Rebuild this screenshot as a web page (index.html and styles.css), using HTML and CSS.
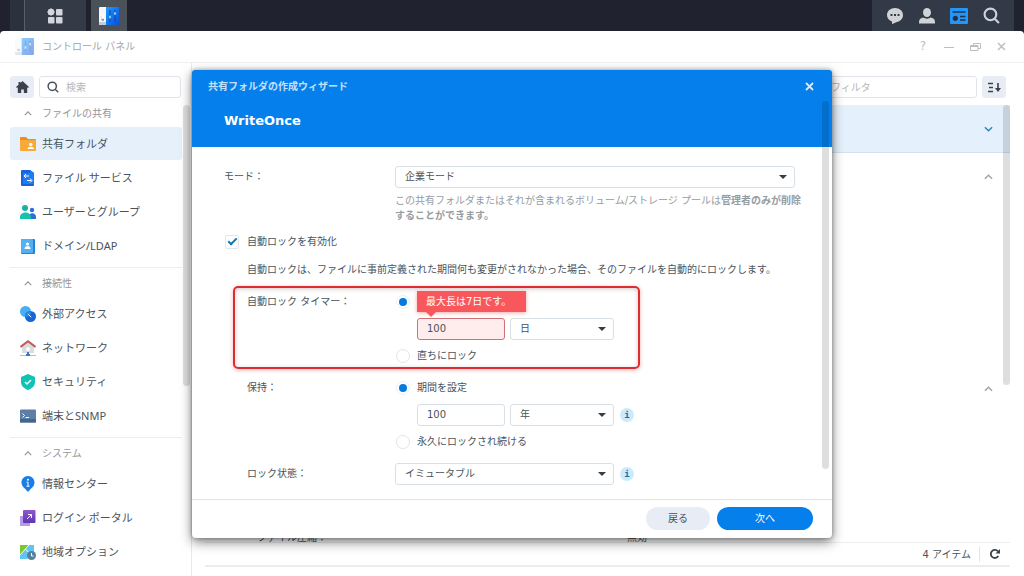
FILE: index.html
```html
<!DOCTYPE html>
<html lang="ja">
<head>
<meta charset="utf-8">
<title>コントロール パネル</title>
<link rel="stylesheet" href="styles.css">
</head>
<body>
<svg class="defs" aria-hidden="true">
  <linearGradient id="panel-blue" x1="0" y1="0" x2="1" y2="1"><stop offset="0" stop-color="#1d9bff"/><stop offset="1" stop-color="#0a50d8"/></linearGradient>
  <linearGradient id="purple" x1="0" y1="0" x2="0" y2="1"><stop offset="0" stop-color="#9058cc"/><stop offset="1" stop-color="#5c36ae"/></linearGradient>
  <symbol id="panel" viewBox="0 0 20 18">
    <path fill="#f4f6fa" d="M1 0h6v18H1a1 1 0 0 1-1-1V1a1 1 0 0 1 1-1z"/>
    <path fill="#c4ccda" d="M0 15h7v3H1a1 1 0 0 1-1-1z"/>
    <rect x="2.500" y="9" width="2.500" height="5" rx="1.200" fill="#8793ab"/><rect x="2.500" y="8" width="2.500" height="4" rx="1.200" fill="#fff"/>
    <path fill="url(#panel-blue)" d="M7 0h12a1 1 0 0 1 1 1v16a1 1 0 0 1-1 1H7z"/>
    <path stroke="#0a45a8" d="M11 3v12M16 3v12"/>
    <path stroke="#8ad0ff" stroke-width="2" stroke-linecap="round" d="M11 9.500v1M16 6v1"/>
  </symbol>
  <symbol id="up" viewBox="0 0 10 6"><path fill="none" stroke="currentColor" stroke-width="1.600" d="M1 5l4-4 4 4"/></symbol>
  <symbol id="caret" viewBox="0 0 8 4"><path fill="#333d47" d="M0 0h8L4 4z"/></symbol>
  <symbol id="search" viewBox="0 0 16 16"><path fill="none" stroke="currentColor" stroke-width="2" d="M7 1.500a5.500 5.500 0 1 1 0 11 5.500 5.500 0 0 1 0-11zM11 11l4 4"/></symbol>
</svg>

<header class="taskbar">
  <nav class="task-left">
    <button class="task menu" aria-label="メインメニュー"><svg width="16" height="16" viewBox="0 0 16 16" fill="#d3d6db"><path d="M4 0l4 4-4 4-4-4z"/><rect x="1" y="1" width="6" height="6" rx="1.500"/><rect x="9" y="1" width="6.500" height="6.500" rx="1"/><rect x="1" y="9" width="6.500" height="6.500" rx="1"/><rect x="9" y="9" width="6.500" height="6.500" rx="1"/></svg></button>
    <button class="task active" aria-label="コントロール パネル"><svg width="20" height="18"><use href="#panel"/></svg></button>
  </nav>
  <nav class="task-right">
    <button aria-label="通知"><svg width="16" height="16" viewBox="0 0 16 16"><path fill="#cfd2d7" d="M8 0c4.600 0 8 3 8 7s-3 6.500-6 7c-1.200.200-3 1.500-5 2v-2.500C2 12.500 0 10 0 7c0-4 3.500-7 8-7z"/><path fill="#323a48" d="M3.500 6h2v2h-2zM7 6h2v2H7zM10.500 6h2v2h-2z"/></svg></button>
    <button aria-label="ユーザー"><svg width="16" height="16" viewBox="0 0 16 16" fill="#cfd2d7"><ellipse cx="8" cy="4.500" rx="4" ry="4.500"/><path d="M0 14c0-3 2-4 4.500-4.500C6 11 10 11 11.500 9.500 14 10 16 11 16 14v1.500H0z"/></svg></button>
    <button aria-label="ウィジェット"><svg width="18" height="16" viewBox="0 0 18 16"><rect width="18" height="16" rx="1" fill="#2196fb"/><path stroke="#263145" stroke-width="1.600" d="M2.500 4h13M10 8.500h5.500M10 12h5.500"/><circle cx="5.300" cy="10.300" r="2.600" fill="#263145"/></svg></button>
    <button class="find" aria-label="検索"><svg width="17" height="17"><use href="#search" width="17" height="17"/></svg></button>
  </nav>
</header>

<main class="window">
  <header class="titlebar">
    <svg class="faded" width="19" height="17"><use href="#panel" width="19" height="17"/></svg>
    <h1>コントロール パネル</h1>
    <div class="controls">
      <button aria-label="ヘルプ">?</button>
      <button aria-label="最小化"><svg width="10" height="10"><path stroke="currentColor" d="M0 5.500h10"/></svg></button>
      <button aria-label="元に戻す"><svg width="11" height="10" fill="none" stroke="currentColor"><path d="M3.500 3V1.500h7v5H8M.500 3.500H8v5H.500zM.500 4.500H8"/></svg></button>
      <button aria-label="閉じる"><svg width="9" height="9"><path stroke="currentColor" stroke-width="1.500" d="M1 1l7 7M8 1L1 8"/></svg></button>
    </div>
  </header>

  <div class="content">
    <aside class="sidebar">
      <div class="side-tools">
        <button class="square" aria-label="ホーム"><svg width="13" height="12" viewBox="0 0 13 12"><path fill="#3a434d" d="M6.500 0L13 6l-1 1-.800-.700V12H7.800V8.500H5.200V12H1.800V6.300L1 7 0 6l2.500-2.300V1h2v1z"/></svg></button>
        <label class="search"><svg width="12" height="12"><use href="#search" width="12" height="12"/></svg><input type="text" placeholder="検索" aria-label="検索"></label>
      </div>
      <nav class="tree">
        <section>
          <h2><svg width="8" height="5"><use href="#up"/></svg>ファイルの共有</h2>
          <a href="#" class="selected"><svg width="16" height="16" viewBox="0 0 16 16"><path fill="#ee8c20" d="M0 2a1 1 0 0 1 1-1h5l2 2h7a1 1 0 0 1 1 1v8H0z"/><path fill="#f9a83a" d="M0 4h16v10a1 1 0 0 1-1 1H1a1 1 0 0 1-1-1z"/><circle cx="10.800" cy="8.500" r="1.700" fill="#fff"/><path fill="#fff" d="M7.500 13c0-3 6.600-3 6.600 0z"/></svg>共有フォルダ</a>
          <a href="#"><svg width="16" height="16" viewBox="0 0 16 16"><path fill="#1763de" d="M2 0h8l4 3v12a1 1 0 0 1-1 1H2a1 1 0 0 1-1-1V1a1 1 0 0 1 1-1z"/><path fill="#1d7bf4" d="M10 0l4 3h-4zM3 3h11v11H3z"/><path fill="none" stroke="#fff" d="M9 6H4.500M6 4L4 6l2 2M7 10.500h4.500M10 8.500l2 2-2 2"/></svg>ファイル サービス</a>
          <a href="#"><svg width="16" height="16" viewBox="0 0 16 16"><circle cx="5" cy="4" r="3" fill="#16b3a4"/><circle cx="12" cy="6" r="2.200" fill="#2d6fd8"/><path fill="#2d6fd8" d="M8 14c0-6 8-6 8-1v2H8z"/><path fill="#18c0b2" d="M0 15v-2c0-6 11-6 11 0v2z"/></svg>ユーザーとグループ</a>
          <a href="#"><svg width="16" height="16" viewBox="0 0 16 16"><rect x="1" y="1" width="14" height="15" rx="1" fill="#2783cf"/><rect x="1" y="1" width="12" height="14" rx="1" fill="#51b1f2"/><circle cx="7.500" cy="6" r="1.600" fill="#fff"/><path fill="#fff" d="M4.500 11c0-4 6-4 6 0z"/></svg>ドメイン/LDAP</a>
        </section>
        <section>
          <h2><svg width="8" height="5"><use href="#up"/></svg>接続性</h2>
          <a href="#"><svg width="16" height="16" viewBox="0 0 16 16"><circle cx="5.500" cy="5.500" r="5.500" fill="#48aff4"/><circle cx="10.500" cy="10.500" r="5.500" fill="#1766d8"/><path fill="#278af0" d="M5.500 8c0-1.500 1-2.700 5.300-3C11 9 9.500 11 5.500 11z"/><path stroke="#fff" stroke-linecap="round" d="M8.500 8.500l2.500 2.500"/></svg>外部アクセス</a>
          <a href="#"><svg width="16" height="16" viewBox="0 0 16 16"><path fill="#d9dde0" d="M2 6l6-5 6 5v7H2z"/><path fill="none" stroke="#c0585c" stroke-width="2" d="M.500 7L8 1.300 15.500 7"/><circle cx="8" cy="9" r="2" fill="#fff"/><path stroke="#b7bdc3" d="M0 15.500h16"/><path fill="#2f7ac0" d="M7 12h2v2h1v2H6v-2h1z"/></svg>ネットワーク</a>
          <a href="#"><svg width="16" height="16" viewBox="0 0 16 16"><path fill="#10c3b5" d="M8 0l7 3v5c0 4-3 6.500-7 8-4-1.500-7-4-7-8V3z"/><path fill="none" stroke="#fff" stroke-width="1.300" d="M5 8l2 2 4-4"/></svg>セキュリティ</a>
          <a href="#"><svg width="16" height="14" viewBox="0 0 16 14"><rect width="16" height="13" y=".5" rx="1" fill="#5d7fa6"/><path fill="#456589" d="M0 10h16v3.500H0z"/><path fill="none" stroke="#fff" d="M2.500 4.500l2 2-2 2M5.500 8.500H9"/></svg>端末とSNMP</a>
        </section>
        <section>
          <h2><svg width="8" height="5"><use href="#up"/></svg>システム</h2>
          <a href="#"><svg width="16" height="16" viewBox="0 0 16 16"><path fill="#1b7de8" d="M8 0c4 0 6.500 3 6.500 6.500C14.500 11 10 13 8 16c-2-3-6.500-5-6.500-9.500C1.500 3 4 0 8 0z"/><circle cx="8" cy="3.700" r="1" fill="#fff"/><path fill="none" stroke="#fff" d="M6.500 6.200H8v4M6.500 10.200h3"/></svg>情報センター</a>
          <a href="#"><svg width="16" height="16" viewBox="0 0 16 16"><rect y="6" width="10" height="10" fill="#b69ae8"/><rect x="3" width="12.500" height="13" rx="1" fill="url(#purple)"/><path fill="none" stroke="#fff" d="M7 9l4-4M8 4.500h3.500V8"/></svg>ログイン ポータル</a>
          <a href="#"><svg width="16" height="16" viewBox="0 0 16 16"><path fill="#7cc72e" d="M0 1h14v13H0z"/><path fill="#5fc6f3" d="M0 11L9 1h5v6L7 15H0z"/><path stroke="#fff" fill="none" d="M0 11L9 1M5 5l9 8"/><circle cx="11.500" cy="11.500" r="4.500" fill="#557f9f"/><path fill="none" stroke="#fff" d="M11.500 9v3h2"/></svg>地域オプション</a>
        </section>
      </nav>
      <div class="scrollbar side-scroll"></div>
    </aside>

    <section class="folders">
      <div class="filter-row">
        <input type="text" placeholder="フィルタ" aria-label="フィルタ">
        <button class="square" aria-label="並べ替え"><svg width="13" height="11" fill="none" stroke="#3a434d" stroke-width="1.600"><path d="M0 1.500h5M1 5.500h4M0 9.500h5M10 1v7"/><path fill="#3a434d" stroke="none" d="M7 6h6l-3 4z"/></svg></button>
      </div>
      <div class="list">
        <div class="entry current"><svg class="down" width="9" height="6"><use href="#up"/></svg></div>
        <div class="entry"><svg width="9" height="6"><use href="#up"/></svg></div>
        <div class="entry far"><svg width="9" height="6"><use href="#up"/></svg></div>
        <dl class="detail"><dt>ファイル圧縮：</dt><dd>無効</dd></dl>
        <div class="scrollbar list-scroll"></div>
      </div>
      <footer class="status"><span>4 アイテム</span><button aria-label="更新"><svg width="10" height="10" viewBox="0 0 10 10"><path fill="none" stroke="#3a434d" stroke-width="1.800" d="M8.300 7A4 4 0 1 1 8 2.500"/><path fill="#3a434d" d="M10 0v4.500H5.500z"/></svg></button></footer>
    </section>
  </div>

  <div class="overlay">
    <form class="wizard" role="dialog" aria-labelledby="wizard-title">
      <header class="wizard-head">
        <div class="wizard-bar"><span id="wizard-title">共有フォルダの作成ウィザード</span><button type="button" aria-label="閉じる"><svg width="9" height="9"><path stroke="#d6ebff" stroke-width="1.800" d="M1 1l7 7M8 1L1 8"/></svg></button></div>
        <h2>WriteOnce</h2>
      </header>
      <div class="wizard-body">
        <div class="row">
          <label class="name" for="mode">モード：</label>
          <div class="field">
            <div class="select wide"><select id="mode"><option>企業モード</option></select><svg width="8" height="4"><use href="#caret"/></svg></div>
            <p class="hint">この共有フォルダまたはそれが含まれるボリューム/ストレージ プールは<strong>管理者のみが削除<br>することができます。</strong></p>
          </div>
        </div>
        <label class="check"><input type="checkbox" checked>自動ロックを有効化</label>
        <p class="note">自動ロックは、ファイルに事前定義された期間何も変更がされなかった場合、そのファイルを自動的にロックします。</p>
        <div class="row sub marked" role="group" aria-labelledby="timer">
          <span class="name" id="timer">自動ロック タイマー：</span>
          <div class="field">
            <div class="line"><input type="radio" name="timer" checked aria-label="期間を設定"><span class="error" role="alert">最大長は7日です。</span></div>
            <div class="line inset">
              <input class="number invalid" type="text" value="100" aria-label="期間">
              <div class="select unit"><select aria-label="単位"><option>日</option></select><svg width="8" height="4"><use href="#caret"/></svg></div>
            </div>
            <label class="line"><input type="radio" name="timer">直ちにロック</label>
          </div>
        </div>
        <div class="row sub" role="group" aria-labelledby="keep">
          <span class="name" id="keep">保持：</span>
          <div class="field">
            <label class="line"><input type="radio" name="keep" checked>期間を設定</label>
            <div class="line inset">
              <input class="number" type="text" value="100" aria-label="保持期間">
              <div class="select unit"><select aria-label="保持単位"><option>年</option></select><svg width="8" height="4"><use href="#caret"/></svg></div>
              <span class="info">i</span>
            </div>
            <label class="line"><input type="radio" name="keep">永久にロックされ続ける</label>
          </div>
        </div>
        <div class="row sub">
          <label class="name" for="state">ロック状態：</label>
          <div class="field line">
            <div class="select medium"><select id="state"><option>イミュータブル</option></select><svg width="8" height="4"><use href="#caret"/></svg></div>
            <span class="info">i</span>
          </div>
        </div>
      </div>
      <footer class="wizard-foot"><button type="button" class="back">戻る</button><button type="submit" class="next">次へ</button></footer>
      <div class="scrollbar wizard-scroll"></div>
    </form>
  </div>
</main>
</body>
</html>
```

FILE: styles.css
```css
* { box-sizing: border-box; }
html, body { height: 100%; }
body {
  margin: 0;
  display: flex;
  flex-direction: column;
  overflow: hidden;
  background: #20232f;
  color: #49535d;
  font: 10px/15px "DejaVu Sans", "Noto Sans CJK JP", sans-serif;
}
h1, h2, p, dl, dd { margin: 0; font-size: inherit; font-weight: normal; }
button, input, select { font: inherit; color: inherit; margin: 0; padding: 0; }
button { border: 0; background: none; display: grid; place-items: center; }
.defs { position: absolute; width: 0; height: 0; }

/* Taskbar */
.taskbar { display: flex; justify-content: space-between; height: 31px; padding: 0 10px; flex: none; }
.task-left { display: flex; gap: 5px; }
.task { width: 36px; }
.menu { width: 76px; padding-left: 14px; background: linear-gradient(90deg, #2b313d 14px, #59606a 14px, #59606a 15px, #343b47 15px); }
.active { background: #4b5159; }
.task-right { display: flex; width: 142px; padding: 0 7px; background: #323a48; }
.task-right button { flex: 1; }
.find { color: #cfd2d7; }

/* Window */
.window { position: relative; flex: 1; min-height: 0; display: flex; flex-direction: column; background: #fff; border-radius: 4px 4px 0 0; }
.titlebar { display: flex; align-items: center; flex: none; height: 32px; padding: 0 13px 0 15px; border-bottom: 1px solid #f0f1f3; color: #a3a6aa; }
.titlebar h1 { margin-left: 8px; }
.faded { opacity: .5; }
.controls { display: flex; gap: 6px; margin-left: auto; color: #bcbfc2; }
.controls button { width: 20px; height: 20px; font-size: 12px; }
.content { flex: 1; min-height: 0; display: flex; }

/* Sidebar */
.sidebar { position: relative; flex: none; width: 192px; padding: 13px 10px 0; border-right: 1px solid #e6e9ed; overflow: hidden; }
.side-tools { display: flex; gap: 5px; }
.square { flex: none; width: 24px; height: 22px; border-radius: 3px; background: #e8edf5; }
.search { display: flex; align-items: center; gap: 7px; width: 143px; height: 22px; padding-left: 7px; border: 1px solid #dfe5ea; border-radius: 3px; }
.search input { width: 100px; border: 0; outline: 0; }
::placeholder { color: #b3b7bb; opacity: 1; }
.tree { margin-top: 3px; width: 172px; font-family: "Noto Sans", "Noto Sans CJK JP", sans-serif; }
.tree section { display: flex; flex-direction: column; gap: 1px; }
.tree section + section { margin-top: 5px; padding-top: 3px; border-top: 1px solid #eceef0; }
.tree h2 { display: flex; align-items: center; gap: 10px; height: 25px; padding-left: 14px; color: #92979c; }
.tree a { display: flex; align-items: center; gap: 6px; height: 33px; padding-left: 10px; border-radius: 3px; color: #49535d; font-size: 11px; text-decoration: none; }
.tree .selected { background: #e5f0fb; }
.scrollbar { position: absolute; width: 7px; border-radius: 4px; background: rgba(0, 0, 0, .13); }
.side-scroll { top: 42px; right: 1px; height: 281px; }

/* Folder list */
.folders { flex: 1; display: flex; flex-direction: column; padding: 13px 14px 9px 13px; }
.filter-row { display: flex; justify-content: flex-end; gap: 5px; padding-right: 4px; }
.filter-row input { width: 160px; height: 22px; padding-left: 13px; border: 1px solid #dfe5ea; border-radius: 3px; }
.list { position: relative; flex: 1; margin-top: 7px; overflow: hidden; }
.entry { display: flex; justify-content: flex-end; align-items: center; height: 47px; padding-right: 17px; color: #a0a5aa; }
.current { height: 48px; background: #e4f0fc; border-bottom: 1px solid #d3e1ee; color: #2f85b5; }
.down { transform: rotate(180deg); }
.far { margin-top: 165px; }
.detail { display: flex; margin-top: 118px; padding-left: 52px; }
.detail dt { width: 370px; }
.list-scroll { top: 0; right: 0; height: 280px; }
.status { display: flex; justify-content: flex-end; align-items: center; height: 25px; border-top: 1px solid #eceef0; border-bottom: 2px solid #ececee; }
.status button { width: 31px; height: 16px; margin-left: 8px; border-left: 1px solid #e3e6e9; }

/* Wizard */
.overlay { position: absolute; inset: 0; display: grid; place-items: center; }
.wizard { position: relative; width: 640px; border-radius: 4px; background: #fff; box-shadow: 0 4px 12px rgba(0, 0, 0, .5), 0 0 4px rgba(0, 0, 0, .3); }
.wizard-head { height: 77px; padding: 9px 16px 0; border-radius: 3px 3px 0 0; background: #057feb; color: #fff; }
.wizard-bar { display: flex; justify-content: space-between; align-items: center; color: #c4e1fc; font-weight: bold; }
.wizard-bar button { width: 13px; height: 15px; }
.wizard-head h2 { margin: 18px 16px 0; font-size: 13px; line-height: 18px; font-weight: bold; }
.wizard-body { display: flex; flex-direction: column; padding: 19px 32px 14px; }
.row { display: grid; grid-template-columns: 171px 1fr; }
.sub { grid-template-columns: 148px 1fr; margin: 10px 0 0 23px; }
.name { line-height: 22px; }
.field { display: flex; flex-direction: column; gap: 5px; }
.field.line { flex-direction: row; gap: 6px; }
.hint { white-space: nowrap; color: #959ca2; }
.check { display: flex; align-items: center; gap: 8px; height: 22px; margin-top: 8px; }
.note { margin: 6px 0 0 23px; line-height: 22px; white-space: nowrap; }
.line { display: flex; align-items: center; gap: 6px; height: 22px; position: relative; }
.inset { gap: 5px; padding-left: 22px; }
.inset .info { margin-left: 1px; }
.select { position: relative; }
.select svg { position: absolute; right: 8px; top: 9px; pointer-events: none; }
.select select { display: block; width: 100%; height: 22px; padding-left: 9px; line-height: 20px; }
.select select, .number { appearance: none; border: 1px solid #d9e0e5; border-radius: 3px; background: #fff; }
.wide { width: 400px; }
.medium { width: 219px; }
.unit { width: 104px; }
.number { width: 88px; height: 22px; padding-left: 9px; }
.invalid { border-color: #d07078; background: #ffecec; }
input[type="checkbox"], input[type="radio"] { appearance: none; flex: none; border: 1px solid #e0e6ea; background: #fff; }
input[type="radio"] { display: grid; place-items: center; width: 14px; height: 14px; margin: 0 1px; border-radius: 50%; }
input[type="radio"]:checked { border-color: #e2f1fe; }
input[type="radio"]:checked::before { content: ""; width: 8px; height: 8px; border-radius: 50%; background: #067add; }
input[type="checkbox"] { display: grid; justify-items: center; width: 14px; height: 14px; margin-left: 1px; border-radius: 2px; }
input[type="checkbox"]:checked::before { content: ""; width: 3px; height: 7px; border: solid #0b79b8; border-width: 0 2px 2px 0; transform: rotate(45deg); }
.info { display: grid; place-items: center; width: 14px; height: 14px; border-radius: 50%; background: #cdeafb; color: #16719f; font: bold 9px/14px "DejaVu Sans Mono", monospace; }
.field > .info, .field.line .info { align-self: center; }
.error { position: absolute; left: 22px; top: 0; width: 109px; padding-left: 9px; line-height: 21px; background: #f8585c; color: #fff; box-shadow: 0 1px 4px rgba(220, 40, 40, .4); }
.error::after { content: ""; position: absolute; left: 9px; top: 21px; border: solid transparent; border-width: 5px 5px 0; border-top-color: #f8585c; }
.marked { position: relative; }
.marked::before { content: ""; position: absolute; left: -14px; right: 160px; top: -5px; bottom: -2px; border: 2px solid #dc2e32; border-radius: 5px; box-shadow: 0 1px 4px rgba(220, 40, 40, .35), inset 0 1px 4px rgba(80, 20, 20, .25); pointer-events: none; }
.wizard-foot { display: flex; justify-content: flex-end; gap: 7px; padding: 7px 19px 8px; border-top: 1px solid #dfe3e6; }
.wizard-foot button { height: 23px; border-radius: 12px; }
.back { width: 64px; background: #e8edf5; }
.wizard-foot .next { width: 96px; background: #057feb; color: #fff; }
.wizard-scroll { top: 31px; right: 3px; height: 368px; }
```
